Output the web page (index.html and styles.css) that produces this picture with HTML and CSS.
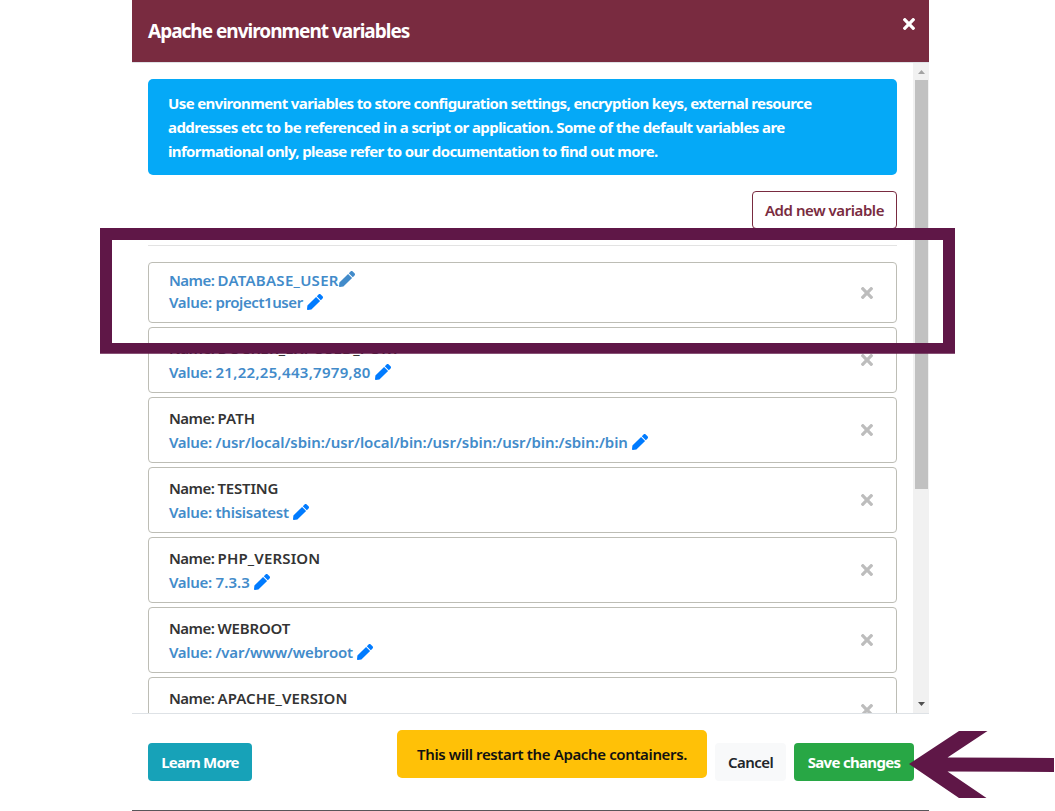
FILE: index.html
```html
<!DOCTYPE html>
<html lang="en">
<head>
<meta charset="utf-8">
<title>Apache environment variables</title>
<link rel="stylesheet" href="styles.css">
</head>
<body>
<svg class="defs" aria-hidden="true">
  <symbol id="pen" viewBox="0 0 512 512"><path d="M290.74 93.24l128.02 128.02-277.99 277.99-114.14 12.6C11.35 513.54-1.56 500.62.14 485.34l12.7-114.22 277.9-277.88zm207.2-19.06l-60.11-60.11c-18.75-18.75-49.16-18.75-67.91 0l-56.55 56.55 128.02 128.02 56.55-56.55c18.75-18.76 18.75-49.16 0-67.91z"/></symbol>
  <symbol id="times" viewBox="0 80 352 352"><path d="M242.72 256l100.07-100.07c12.28-12.28 12.28-32.19 0-44.48l-22.24-22.24c-12.28-12.28-32.19-12.28-44.48 0L176 189.28 75.93 89.21c-12.28-12.28-32.19-12.28-44.48 0L9.21 111.45c-12.28 12.28-12.28 32.19 0 44.48L109.28 256 9.21 356.07c-12.28 12.28-12.28 32.19 0 44.48l22.24 22.24c12.28 12.28 32.2 12.28 44.48 0L176 322.72l100.07 100.07c12.28 12.28 32.2 12.28 44.48 0l22.24-22.24c12.28-12.28 12.28-32.19 0-44.48L242.72 256z"/></symbol>
</svg>
<div class="modal">
  <header class="header">
    <h1 class="title">Apache environment variables</h1>
    <svg class="close"><use href="#times"/></svg>
  </header>
  <div class="body">
    <div class="content">
      <div class="info"><span class="i1">Use environment variables to store configuration settings, encryption keys, external resource</span><br><span class="i2">addresses etc to be referenced in a script or application. Some of the default variables are</span><br><span class="i3">informational only, please refer to our documentation to find out more.</span></div>
      <div class="toolbar"><button class="btn add">Add new variable</button></div>
      <hr class="rule">
      <div class="rows">
        <div class="row active">
          <div class="text"><div class="line link"><span class="label-name">Name: </span><span class="n1">DATABASE_USER</span><svg class="pen muted"><use href="#pen"/></svg></div><div class="line link"><span class="label-value">Value: </span><span class="v1">project1user</span><svg class="pen gap"><use href="#pen"/></svg></div></div>
          <svg class="remove"><use href="#times"/></svg>
        </div>
        <div class="row">
          <div class="text"><div class="line"><span class="label-name">Name: </span><span class="n2">DOCKER_EXPOSED_PORT</span></div><div class="line link"><span class="label-value">Value: </span><span class="v2">21,22,25,443,7979,80</span><svg class="pen gap"><use href="#pen"/></svg></div></div>
          <svg class="remove"><use href="#times"/></svg>
        </div>
        <div class="row">
          <div class="text"><div class="line"><span class="label-name">Name: </span><span class="n3">PATH</span></div><div class="line link"><span class="label-value">Value: </span><span class="v3">/usr/local/sbin:/usr/local/bin:/usr/sbin:/usr/bin:/sbin:/bin</span><svg class="pen gap"><use href="#pen"/></svg></div></div>
          <svg class="remove"><use href="#times"/></svg>
        </div>
        <div class="row">
          <div class="text"><div class="line"><span class="label-name">Name: </span><span class="n4">TESTING</span></div><div class="line link"><span class="label-value">Value: </span><span class="v4">thisisatest</span><svg class="pen gap"><use href="#pen"/></svg></div></div>
          <svg class="remove"><use href="#times"/></svg>
        </div>
        <div class="row">
          <div class="text"><div class="line"><span class="label-name">Name: </span><span class="n5">PHP_VERSION</span></div><div class="line link"><span class="label-value">Value: </span><span class="v5">7.3.3</span><svg class="pen gap"><use href="#pen"/></svg></div></div>
          <svg class="remove"><use href="#times"/></svg>
        </div>
        <div class="row">
          <div class="text"><div class="line"><span class="label-name">Name: </span><span class="n6">WEBROOT</span></div><div class="line link"><span class="label-value">Value: </span><span class="v6">/var/www/webroot</span><svg class="pen gap"><use href="#pen"/></svg></div></div>
          <svg class="remove"><use href="#times"/></svg>
        </div>
        <div class="row">
          <div class="text"><div class="line"><span class="label-name">Name: </span><span class="n7">APACHE_VERSION</span></div></div>
          <svg class="remove"><use href="#times"/></svg>
        </div>
      </div>
    </div>
    <div class="scrollbar">
      <svg class="arrow up" viewBox="0 0 7 4"><path d="M0 4h7L3.5 0z"/></svg>
      <div class="thumb"></div>
      <svg class="arrow down" viewBox="0 0 7 4"><path d="M0 0h7L3.5 4z"/></svg>
    </div>
  </div>
  <footer class="footer">
    <button class="btn learn">Learn More</button>
    <div class="warning">This will restart the Apache containers.</div>
    <button class="btn cancel">Cancel</button>
    <button class="btn save">Save changes</button>
  </footer>
</div>
<div class="highlight"></div>
<svg class="pointer" viewBox="0 0 146 68"><path d="M0 34L50 1h28.500L38.500 27.500l106.500.5v14L38.500 41.500 77.500 68H50z"/></svg>
</body>
</html>
```

FILE: styles.css
```css
* { box-sizing: border-box; }
body {
  margin: 0;
  height: 811px;
  overflow: hidden;
  background: #fff;
  font: 600 15px/24px "Noto Sans", "Open Sans", sans-serif;
  color: #343434;
}
span, .title, .btn, .warning { white-space: nowrap; }
.defs { position: absolute; width: 0; height: 0; }
.modal {
  display: flex;
  flex-direction: column;
  width: 797px;
  height: 811px;
  margin-left: 132px;
  border-bottom: 1px solid #58565a;
}
.header {
  display: flex;
  justify-content: space-between;
  height: 63px;
  padding: 16px 14.5px 0 16px;
  background: #792b40;
  background-clip: padding-box;
  border-bottom: 1px solid #dee2e6;
  color: #fff;
}
.title { margin: 0; font-size: 19px; line-height: 30px; font-weight: 700; letter-spacing: -1px; }
.close { width: 12px; height: 12px; margin-top: 2px; fill: #fff; }
.body { display: flex; height: 650px; overflow: hidden; }
.content { width: 781px; padding: 16px; }
.info {
  height: 96px;
  padding: 12px 20px;
  border-radius: 5px;
  background: #05a9f7;
  color: #fff;
  font-weight: 700;
}
.i1 { letter-spacing: -.62px; }
.i2 { letter-spacing: -.58px; }
.i3 { letter-spacing: -.64px; }
.toolbar { display: flex; justify-content: flex-end; margin-top: 16px; }
.btn {
  height: 38px;
  padding: 0;
  border: 0;
  border-radius: 4px;
  font: inherit;
  text-align: center;
}
.add { width: 145px; border: 1px solid #792b40; background: #fff; color: #792b40; letter-spacing: -.44px; }
.rule { height: 1px; margin: 16px 0; border: 0; background: #e3e3e3; }
.rows { display: flex; flex-direction: column; gap: 4px; }
.row {
  display: flex;
  justify-content: space-between;
  flex: none;
  height: 66px;
  padding: 8px 23.5px 0 20px;
  border: 1px solid #bdbdb5;
  border-radius: 4px;
}
.line { display: flex; align-items: flex-start; height: 24px; }
.label-name, .label-value { flex: none; white-space: pre; }
.label-name { width: 48.500px; letter-spacing: -.55px; }
.label-value { width: 46.500px; letter-spacing: -.3px; }
.n1 { letter-spacing: .27px; }
.n2 { letter-spacing: .2px; }
.n3 { letter-spacing: .1px; }
.n4 { letter-spacing: -.2px; }
.n5 { letter-spacing: .16px; }
.n6 { letter-spacing: -.2px; }
.n7 { letter-spacing: .07px; }
.v1 { letter-spacing: -.42px; }
.v2 { letter-spacing: .28px; }
.v3 { letter-spacing: -.06px; }
.v4 { letter-spacing: -.25px; }
.v5 { letter-spacing: .1px; }
.v6 { letter-spacing: -.17px; }
.link { color: #428bca; }
.pen { width: 16px; height: 16px; margin-top: 4px; fill: #007bff; }
.gap { margin-left: 4px; }
.muted { fill: #428bca; }
.remove { width: 12px; height: 12px; margin-top: 18px; fill: #bdbdbd; }
.active { height: 61px; padding-top: 6px; }
.active .line { height: 22px; line-height: 22px; }
.active .pen { margin-top: 2px; }
.active .gap { margin-top: 3px; }
.scrollbar { display: flex; flex-direction: column; align-items: center; width: 16px; background: #f1f1f1; }
.arrow { width: 7px; height: 4px; }
.up { margin: 7px 0 6px; fill: #a3a3a3; }
.thumb { width: 13px; height: 409px; background: #c1c1c1; }
.down { margin-top: 213px; fill: #505050; }
.footer { display: flex; height: 97px; padding: 29px 15px 0 16px; border-top: 1px solid #dee2e6; }
.footer > * { flex: none; }
.learn, .cancel, .save { align-self: flex-start; }
.footer .warning {
  width: 310px;
  height: 48px;
  margin: -13px 8px 0 145px;
  padding-top: 12px;
  border-radius: 5px;
  background: #ffc107;
  color: #111;
  letter-spacing: -.37px;
  text-align: center;
}
.learn { width: 104px; background: #17a2b8; color: #fff; font-weight: 700; letter-spacing: -.8px; }
.cancel { width: 71px; margin-right: 8px; background: #f8f9fa; color: #212529; letter-spacing: -.55px; }
.save { width: 120px; background: #28a745; color: #fff; font-weight: 700; letter-spacing: -.68px; }
.highlight {
  position: absolute;
  left: 100px;
  top: 228px;
  width: 855px;
  height: 125px;
  border: 12px solid #5f1747;
  border-bottom-width: 10px;
  box-shadow: 0 1px rgba(95, 23, 71, .75);
}
.pointer { position: absolute; left: 909px; top: 730px; width: 146px; height: 68px; fill: #5f1747; }
```
